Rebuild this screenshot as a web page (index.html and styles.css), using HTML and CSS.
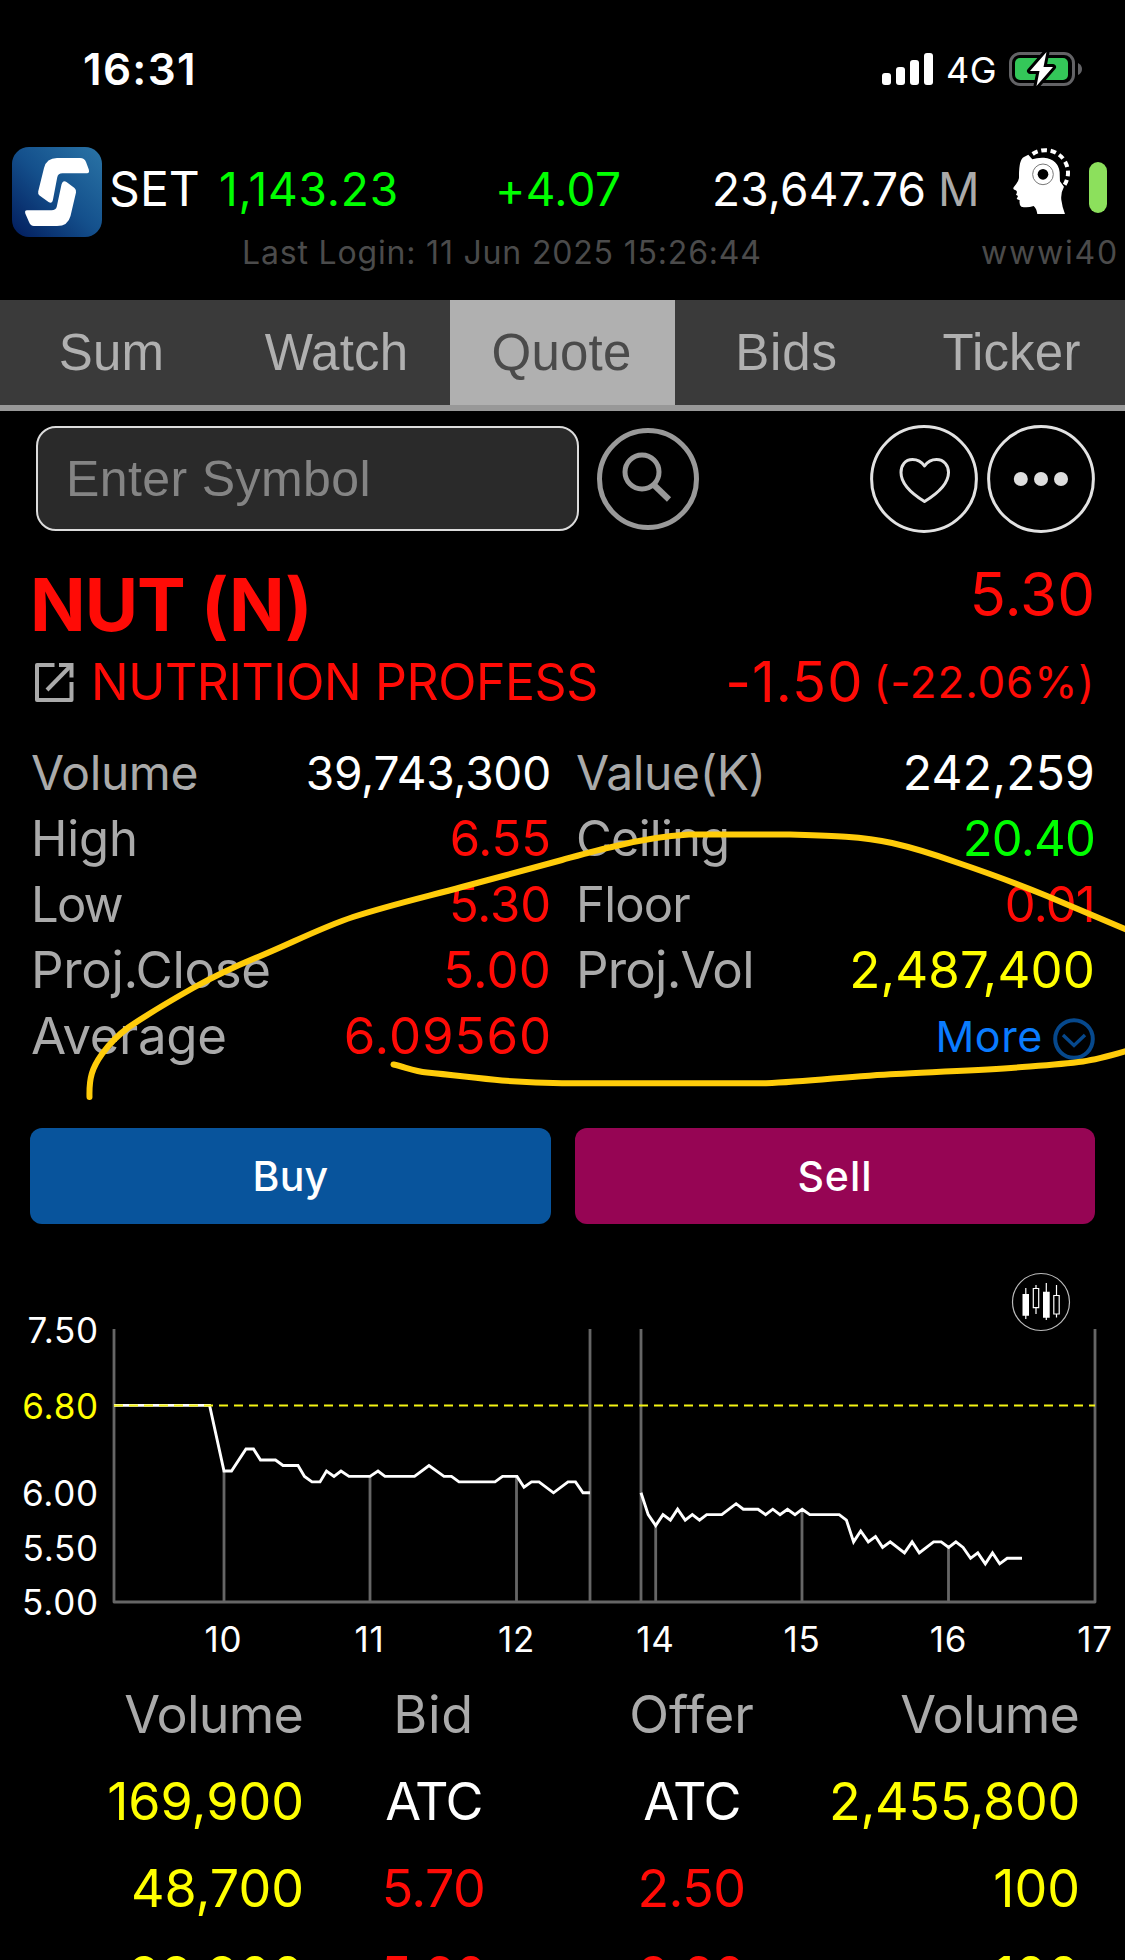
FILE: index.html
```html
<!DOCTYPE html>
<html lang="en">
<head>
<meta charset="utf-8">
<title>NUT Quote</title>
<link rel="stylesheet" href="styles.css">
</head>
<body>
<div class="screen">

  <div class="status">
    <span class="clock">16:31</span>
    <svg class="signal" width="51" height="32" viewBox="0 0 51 32" fill="#fff">
      <rect x="0" y="20" width="9" height="12" rx="3"/>
      <rect x="14" y="14" width="9" height="18" rx="3"/>
      <rect x="28" y="7" width="9" height="25" rx="3"/>
      <rect x="42" y="0" width="9" height="32" rx="3"/>
    </svg>
    <span class="network">4G</span>
    <svg class="battery" width="74" height="38" viewBox="0 0 74 38">
      <rect x="1.5" y="3.5" width="63" height="31" rx="9.5" fill="none" stroke="#636366" stroke-width="3"/>
      <path d="M69 13 Q73 15 73 19 Q73 23 69 25 Z" fill="#636366"/>
      <rect x="6" y="8" width="53" height="22" rx="5" fill="#34c759"/>
      <path d="M37.5 2 L21 21 H30.5 L27.5 36 L44 17 H34.5 Z" fill="#fff" stroke="#000" stroke-width="6" stroke-linejoin="round" paint-order="stroke"/>
    </svg>
  </div>

  <header class="market">
    <div class="market-row">
      <svg class="logo" width="90" height="90" viewBox="0 0 90 90">
        <defs><linearGradient id="lg" x1="0" y1="1" x2="1" y2="0"><stop offset="0" stop-color="#021c5c"/><stop offset=".5" stop-color="#14508c"/><stop offset="1" stop-color="#2a74a6"/></linearGradient></defs>
        <rect width="90" height="90" rx="17" fill="url(#lg)"/>
        <path fill="#fff" d="M45 11 H68 Q72.5 11 74 15 L76.8 22.5 Q77.8 26.3 75 26.3 H50.5 Q46 26.3 45.2 30.5 L41 52.5 Q40 57.5 36.5 55 L27.5 48.5 Q25.7 47 26.2 44.5 L32 21 Q34.5 11 45 11 Z"/>
        <path fill="#fff" d="M45 79 H22 Q18.5 79 17 75 L13.3 66.5 Q12.4 63.3 15 63.3 H39.5 Q44 63.3 44.8 59.5 L49.5 37.5 Q51 32.5 54.5 35 L62.5 41 Q64.6 43 64 45.5 L58.5 69 Q56 79 45 79 Z"/>
      </svg>
      <span class="index-name">SET</span>
      <span class="index-value up">1,143.23</span>
      <span class="index-change up">+4.07</span>
      <span class="index-turnover">23,647.76</span>
      <span class="index-unit">M</span>
      <svg class="head" width="63.3" height="66.7" viewBox="60 50 190 200">
        <path fill="#fff" d="M115 70 L127 84 Q142 78 162 79 Q205 84 209 122 L210 150 L222 166 Q212 184 214 205 Q217 228 225 248 H142 Q140 232 131 224 Q112 230 94 226 Q87 222 89 207 L80 203 L84 194 L78 190 Q84 180 77 177 Q67 175 71 168 Q86 150 87 140 Q86 84 102 77 Z"/>
        <path fill="none" stroke="#fff" stroke-width="12" stroke-dasharray="17 11" d="M128 68 A68 68 0 0 1 224 160"/>
        <circle cx="159" cy="129" r="31" fill="#fff" stroke="#777" stroke-width="3"/>
        <circle cx="159" cy="129" r="16" fill="#000"/>
      </svg>
      <span class="pill"></span>
    </div>
    <div class="session">
      <span class="last-login">Last Login: 11 Jun 2025 15:26:44</span>
      <span class="server">wwwi40</span>
    </div>
  </header>

  <nav class="tabs">
    <a class="tab">Sum</a>
    <a class="tab">Watch</a>
    <a class="tab active">Quote</a>
    <a class="tab bids">Bids</a>
    <a class="tab">Ticker</a>
  </nav>

  <div class="search">
    <div class="field">Enter Symbol</div>
    <svg class="find" width="102" height="102" viewBox="0 0 102 102" fill="none" stroke="#999" stroke-width="5">
      <circle cx="51" cy="51" r="48.5"/>
      <circle cx="45" cy="44" r="17"/>
      <path d="M57.5 57.5 L72 71.5" stroke-width="6"/>
    </svg>
    <svg class="fav" width="108" height="108" viewBox="0 0 108 108" fill="none" stroke="#e2e2e2" stroke-width="3">
      <circle cx="54" cy="54" r="52.4"/>
      <path stroke-linejoin="round" d="M54.5 41 C51 36 46.5 34.5 42.5 34.5 C35 34.5 31 40.5 31 47.5 C31 59 43 69.5 54.5 76.5 C66 69.5 78.5 59 78.5 47.5 C78.5 40.5 74 34.5 66.5 34.5 C62.5 34.5 58 36 54.5 41 Z"/>
    </svg>
    <svg class="menu" width="108" height="108" viewBox="0 0 108 108">
      <circle cx="54" cy="54" r="52.4" fill="none" stroke="#e2e2e2" stroke-width="3"/>
      <g fill="#dedede"><circle cx="33.8" cy="54" r="7"/><circle cx="54" cy="54" r="7"/><circle cx="74" cy="54" r="7"/></g>
    </svg>
  </div>

  <main class="quote">
    <div class="title-row">
      <h1 class="symbol">NUT (N)</h1>
      <span class="price">5.30</span>
    </div>
    <div class="name-row">
      <svg class="open" width="39" height="39" viewBox="0 0 39 39" fill="none" stroke="#aaa" stroke-width="4">
        <path stroke-linejoin="round" d="M19.500 2 H2 V37 H36.500 V19"/>
        <path d="M24 2 H36.500 V14.500"/>
        <path d="M36 2.500 L12 27"/>
      </svg>
      <span class="company">NUTRITION PROFESS</span>
      <span class="change">-1.50</span>
      <span class="percent">(-22.06%)</span>
    </div>

    <div class="stats">
      <dl class="col">
        <div class="stat"><dt>Volume</dt><dd class="flat vol">39,743,300</dd></div>
        <div class="stat mid"><dt>High</dt><dd class="down">6.55</dd></div>
        <div class="stat mid low"><dt>Low</dt><dd class="down">5.30</dd></div>
        <div class="stat big"><dt class="close">Proj.Close</dt><dd class="down">5.00</dd></div>
        <div class="stat big"><dt class="close">Average</dt><dd class="down avg">6.09560</dd></div>
      </dl>
      <dl class="col">
        <div class="stat"><dt>Value(K)</dt><dd class="flat value">242,259</dd></div>
        <div class="stat mid tight"><dt>Ceiling</dt><dd class="up">20.40</dd></div>
        <div class="stat mid tight"><dt>Floor</dt><dd class="down">0.01</dd></div>
        <div class="stat big"><dt class="tight">Proj.Vol</dt><dd class="yellow">2,487,400</dd></div>
        <div class="stat more">
          <span>More</span>
          <svg width="42" height="42" viewBox="0 0 42 42" fill="none" stroke="#06488c" stroke-width="4">
            <circle cx="21" cy="21" r="18.8"/>
            <path d="M10 17 L21 27.500 L32 17" stroke-width="3.4"/>
          </svg>
        </div>
      </dl>
    </div>

    <div class="actions">
      <button class="btn buy">Buy</button>
      <button class="btn sell">Sell</button>
    </div>

    <svg class="chart" width="1125" height="446" viewBox="0 1224 1125 446">
      <g class="axis">
        <path d="M114 1329 V1602 H1095 V1329 M590 1329 V1602 M641 1329 V1602"/>
        <path d="M224 1471 V1602 M370 1477 V1602 M516.500 1477 V1602 M655.700 1526 V1602 M802 1509 V1602 M948.500 1547 V1602"/>
      </g>
      <g class="trace">
        <path id="am" d="M114 1405.400 L209.600 1405.400 L224 1471 L231.500 1471 L246 1449 L253.500 1449 L260.500 1460 L275.500 1460 L283 1465.500 L298 1465.500 L304.500 1476.400 L312 1481.900 L320 1481.900 L326.500 1471 L334 1476.400 L341 1471 L349 1476.400 L370 1476.400 L378 1471 L385 1476.400 L414.500 1476.400 L429 1465.500 L444 1476.400 L451.500 1476.400 L459 1481.900 L495 1481.900 L502.500 1476.400 L517 1476.400 L524 1487.300 L531.500 1481.900 L539 1481.900 L553.500 1492.800 L568 1481.900 L575.500 1481.900 L583 1492.800 L590 1492.800"/>
        <path id="pm" d="M641 1492.800 L648.200 1514.600 L655.700 1525.600 L663 1514.600 L670.400 1520.100 L677.600 1509.200 L685.200 1520.100 L692.300 1514.600 L699.500 1520.100 L706.700 1514.600 L721.800 1514.600 L736.100 1503.700 L743.300 1509.200 L758 1509.200 L765.600 1514.600 L772.800 1509.200 L780 1514.600 L787.500 1509.200 L795 1514.600 L802.200 1509.200 L809.800 1514.600 L839.200 1514.600 L846.400 1520.100 L853.600 1541.900 L860.700 1531 L868.300 1541.900 L875.500 1536.500 L882.600 1547.400 L890.200 1541.900 L904.500 1552.900 L912.100 1541.900 L919.300 1552.900 L933.600 1541.900 L941.200 1541.900 L948.700 1547.400 L955.900 1541.900 L963.100 1547.400 L970.600 1558.300 L977.800 1552.900 L985.300 1563.800 L992.500 1552.900 L999.700 1563.800 L1007.200 1558.300 L1022 1558.300"/>
      </g>
      <path class="prev-close" d="M114 1405.500 H1095"/>
      <g class="y-labels">
        <text x="99" y="1342.500">7.50</text>
        <text x="99" y="1419" class="yellow-fill">6.80</text>
        <text x="99" y="1506">6.00</text>
        <text x="99" y="1561">5.50</text>
        <text x="99" y="1615">5.00</text>
      </g>
      <g class="x-labels">
        <text x="223.500" y="1652">10</text>
        <text x="369.500" y="1652">11</text>
        <text x="516.500" y="1652">12</text>
        <text x="655.500" y="1652">14</text>
        <text x="802" y="1652">15</text>
        <text x="948.500" y="1652">16</text>
        <text x="1095" y="1652">17</text>
      </g>
      <g class="candles">
        <circle cx="1041" cy="1302" r="28.5" fill="#000" stroke="#bbb" stroke-width="1.2"/>
        <path fill="#fff" d="M1022.500 1294 h6.500 v21.700 h-6.500z M1043 1291.700 h6.700 v26 h-6.700z"/>
        <path fill="none" stroke="#fff" stroke-width="1.2" d="M1033.300 1288.500 h5.400 v19.200 h-5.400z M1053.800 1295.500 h5.400 v18.500 h-5.400z M1025.800 1288 v31 M1036 1285 v3.500 M1036 1307.700 v6.300 M1046.300 1283 v37 M1056.500 1285 v10.500 M1056.500 1314 v3.500"/>
      </g>
    </svg>

    <div class="book">
      <div class="book-row head-row"><span>Volume</span><span class="bid-h">Bid</span><span>Offer</span><span>Volume</span></div>
      <div class="book-row"><span>169,900</span><span class="flat atc">ATC</span><span class="flat atc">ATC</span><span class="total">2,455,800</span></div>
      <div class="book-row"><span>48,700</span><span class="down">5.70</span><span class="down">2.50</span><span>100</span></div>
      <div class="book-row"><span>99,900</span><span class="down">5.60</span><span class="down">2.60</span><span>100</span></div>
    </div>
  </main>

  <svg class="ink" width="1125" height="300" viewBox="0 820 1125 300">
    <path d="M89.500 1097 C89 1078 92 1068 102 1054 C110 1043 118 1035 129 1027 C148 1014 170 1001 193 988 C215 976 236 966 258 957 C290 944 320 928 353 917 C390 905 425 897 462 887 L562 860 C580 855 597 850 616 846 C640 840 663 836 689 834.500 H790 C825 835.500 860 836 892 843 C914 848 936 855 957 862.500 C988 873 1018 884 1047 896 L1130 931"/>
    <path d="M393.500 1064.500 C405 1067 414 1071 427 1072.500 C453 1075 476 1078 502 1080.500 C522 1082 542 1083 562 1083.300 H766 C810 1081.500 852 1076 896 1074 C935 1072 973 1070.500 1011 1068 C1035 1066 1060 1064.500 1083 1061.500 C1098 1059.500 1113 1055 1130 1050"/>
  </svg>
</div>
</body>
</html>
```
FILE: styles.css
```css
* { box-sizing: border-box; }

body {
  margin: 0;
  background: #000;
  color: #fff;
  font-family: Inter, "Liberation Sans", sans-serif;
}

svg { display: block; flex: none; }

.screen {
  position: relative;
  width: 1125px;
  height: 1960px;
  overflow: hidden;
}

.up { color: #0f0; }
.down { color: #ff0b06; }
.flat { color: #fff; }
.yellow { color: #ff0; }

/* Status bar */
.status {
  display: flex;
  align-items: center;
  height: 138px;
  padding: 0 42px 0 83px;
}
.clock { font-size: 44px; font-weight: 600; letter-spacing: 1.3px; margin-right: auto; }
.network { font-size: 36px; letter-spacing: .5px; margin: 2px 11px 0 13px; width: 52px; }

/* Index header */
.market { height: 162px; }
.market-row {
  display: grid;
  grid-template-columns: 97px 110px 275px 218px 226px 72px 79px auto;
  align-items: center;
  height: 102px;
  padding-left: 12px;
  font-size: 46px;
  line-height: 56px;
}
.logo { margin-top: 6px; }
.index-name { font-size: 48px; letter-spacing: .1px; }
.index-value { letter-spacing: .8px; }
.index-change { letter-spacing: .3px; padding-left: 1px; }
.index-turnover { letter-spacing: .2px; }
.index-unit { color: #aaa; }
.head { margin-top: -16px; }
.pill { width: 18px; height: 51px; border-radius: 9px; background: #8ce05c; margin-top: -3px; }

.session {
  display: flex;
  justify-content: space-between;
  height: 24px;
  padding: 0 6px 0 242px;
  font-size: 32px;
  line-height: 25px;
  color: #4b4b4b;
}
.last-login { letter-spacing: .82px; }
.server { letter-spacing: 1.8px; }

/* Tabs */
.tabs {
  display: grid;
  grid-template-columns: repeat(5, 1fr);
  height: 111px;
  border-bottom: 6px solid #989898;
  background: #3a3a3a;
}
.tab {
  padding-right: 2px;
  font: 51px/105px "Liberation Sans", Arial, sans-serif;
  letter-spacing: .2px;
  text-align: center;
  color: #b0b0b0;
}
.tab.active { background: #b0b0b0; color: #4a4a4a; }
.tab.bids { letter-spacing: .8px; }

/* Symbol search */
.search {
  display: flex;
  align-items: center;
  height: 108px;
  margin-top: 14px;
  padding: 0 30px 0 36px;
}
.field {
  width: 543px;
  height: 105px;
  margin-top: -2px;
  padding-left: 28px;
  border: 2px solid #dcdcdc;
  border-radius: 20px;
  background: #2a2a2a;
  color: #848484;
  font: 50px/103px "Liberation Sans", Arial, sans-serif;
  letter-spacing: .4px;
}
.find { margin: 0 auto 0 18px; }
.menu { margin-left: 9px; }

/* Symbol title */
.title-row {
  display: flex;
  justify-content: space-between;
  align-items: center;
  height: 99px;
  margin-top: 22px;
  padding: 0 30px;
  color: #ff0b06;
}
.symbol { margin: 0; font-size: 73px; font-weight: 700; letter-spacing: -1px; }
.price { font-size: 60px; padding-bottom: 22px; }
.name-row {
  display: flex;
  align-items: center;
  height: 56px;
  padding: 0 30px 0 35px;
  color: #ff0b06;
}
.company { font-size: 50px; letter-spacing: -.45px; margin: 0 auto 0 17px; }
.change { font-size: 56px; letter-spacing: 1px; margin-right: 10px; }
.percent { font-size: 44px; letter-spacing: .8px; }

/* Figures */
.stats {
  display: grid;
  grid-template-columns: 520px 519px;
  column-gap: 25px;
  margin-top: 30px;
  padding-left: 31px;
}
.col { margin: 0; }
.stat {
  display: flex;
  justify-content: space-between;
  align-items: center;
  height: 65.7px;
  font-size: 48px;
  letter-spacing: -.4px;
}
.stat dd { margin: 0; }
.stat dt { color: #aaa; }
.stat .vol { font-size: 46px; letter-spacing: -.2px; }
.stat .value { letter-spacing: .2px; }
.mid { font-size: 49px; letter-spacing: -.1px; }
.mid.tight { letter-spacing: -.8px; }
.mid.low dt { letter-spacing: -1.8px; }
.big { font-size: 51px; letter-spacing: .1px; }
.big .close { letter-spacing: -.35px; }
.big .tight { letter-spacing: -.8px; }
.big .avg { letter-spacing: .9px; margin-right: -1px; }
.more {
  justify-content: flex-end;
  gap: 10px;
  font-size: 43px;
  letter-spacing: .6px;
  color: #0a7cff;
}
.more svg { margin-top: 6px; }

/* Buy and sell */
.actions {
  display: grid;
  grid-template-columns: 521px 520px;
  column-gap: 24px;
  margin-top: 59.5px;
  padding-left: 30px;
}
.btn {
  height: 96px;
  padding: 0;
  border: 0;
  border-radius: 12px;
  color: #fff;
  font: 500 41px/96px Inter, sans-serif;
  letter-spacing: .2px;
}
.buy { background: #08549c; }
.sell { background: #960554; letter-spacing: 1px; }

/* Intraday chart */
.axis path { fill: none; stroke: #666; stroke-width: 2.8; stroke-linejoin: round; }
.trace path { fill: none; stroke: #fff; stroke-width: 2.9; stroke-linejoin: miter; }
.prev-close { fill: none; stroke: #f4f414; stroke-width: 2; stroke-dasharray: 9 6; }
.chart text { font-size: 35px; fill: #fff; }
.y-labels text { text-anchor: end; letter-spacing: .8px; }
.x-labels text { text-anchor: middle; letter-spacing: .8px; }
.y-labels .yellow-fill { fill: #ff0; }

/* Bid and offer book */
.book-row {
  display: grid;
  grid-template-columns: 304px 259px 257px 260px;
  height: 87px;
  font-size: 52px;
  line-height: 90px;
  color: #ff0;
  text-align: center;
}
.book-row span:first-child,
.book-row span:last-child { text-align: right; }
.book-row .down { color: #ff0b06; letter-spacing: -.6px; }
.book-row .flat { color: #fff; }
.book-row .atc { letter-spacing: -1.7px; }
.book-row .total { letter-spacing: -.3px; }
.head-row { color: #aaa; letter-spacing: -.8px; }
.head-row span:first-child,
.head-row span:last-child { padding-right: 1px; }
.head-row .bid-h { letter-spacing: .6px; }
.head-row span:nth-child(3) { letter-spacing: 0; }

/* Hand-drawn marker over the figures */
.ink { position: absolute; left: 0; top: 820px; pointer-events: none; }
.ink path { fill: none; stroke: #ffcc0a; stroke-width: 6; stroke-linecap: round; stroke-linejoin: round; }
```
